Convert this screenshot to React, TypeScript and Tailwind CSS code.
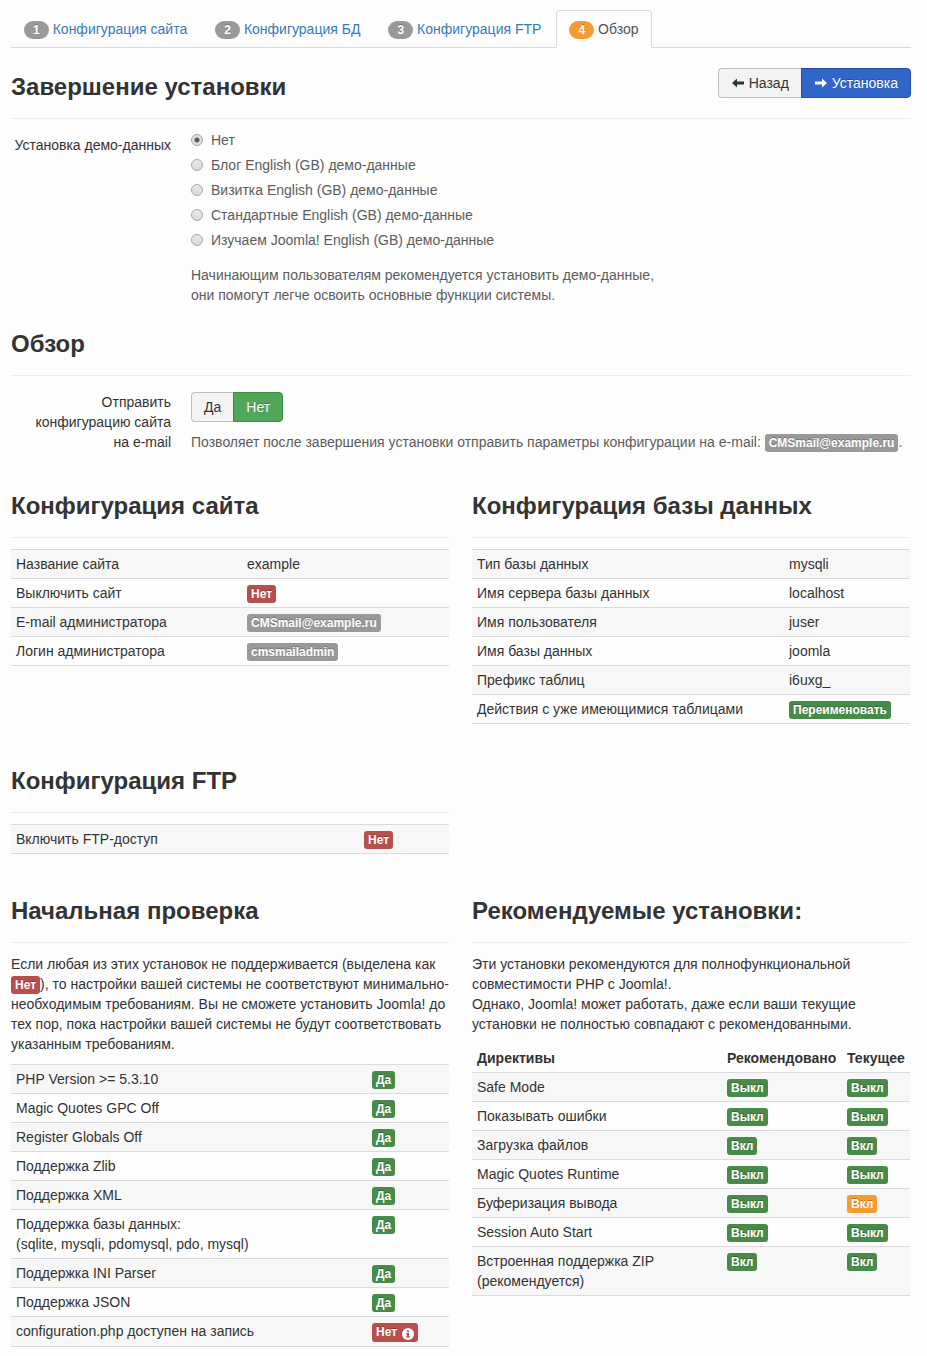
import { useState, type ReactNode } from "react";

type Tone = "gray" | "red" | "green" | "orange";

const tones: Record<Tone, string> = {
  gray: "bg-[#999999]",
  red: "bg-[#b94f4d]",
  green: "bg-[#488a4a]",
  orange: "bg-[#f59b30]",
};

function Label({ tone, children }: { tone: Tone; children: ReactNode }) {
  return (
    <span
      className={`inline-block whitespace-nowrap rounded-[3px] px-1 py-0.5 align-baseline text-[12px] leading-[14px] font-bold text-white [text-shadow:0_-1px_0_rgba(0,0,0,0.25)] ${tones[tone]}`}
    >
      {children}
    </span>
  );
}

const yes = <Label tone="green">Да</Label>;
const on = <Label tone="green">Вкл</Label>;
const off = <Label tone="green">Выкл</Label>;

function Heading({ children }: { children: ReactNode }) {
  return (
    <h3 className="mb-[11px] border-b border-[#ececec] pb-[11px] text-[24px] leading-10 font-bold">
      {children}
    </h3>
  );
}

type Row = [ReactNode, ...ReactNode[]];

function DataTable({ rows, widths, head }: { rows: Row[]; widths: string[]; head?: string[] }) {
  return (
    <table className="w-full table-fixed border-collapse text-left">
      <colgroup>
        {widths.map((w, i) => (
          <col key={i} className={w} />
        ))}
      </colgroup>
      {head && (
        <thead>
          <tr>
            {head.map((h) => (
              <th key={h} scope="col" className="px-[5px] py-1 font-bold">
                {h}
              </th>
            ))}
          </tr>
        </thead>
      )}
      <tbody className="border-b border-[#dadada]">
        {rows.map((row, i) => (
          <tr key={i} className="border-t border-[#dadada] odd:bg-[#f7f7f7]">
            {row.map((cell, j) => (
              <td key={j} className="px-[5px] py-1 align-top">
                {cell}
              </td>
            ))}
          </tr>
        ))}
      </tbody>
    </table>
  );
}

const steps = ["Конфигурация сайта", "Конфигурация БД", "Конфигурация FTP", "Обзор"];

const samples = [
  "Нет",
  "Блог English (GB) демо-данные",
  "Визитка English (GB) демо-данные",
  "Стандартные English (GB) демо-данные",
  "Изучаем Joomla! English (GB) демо-данные",
];

const siteRows: Row[] = [
  ["Название сайта", "example"],
  ["Выключить сайт", <Label tone="red">Нет</Label>],
  ["E-mail администратора", <Label tone="gray">CMSmail@example.ru</Label>],
  ["Логин администратора", <Label tone="gray">cmsmailadmin</Label>],
];

const databaseRows: Row[] = [
  ["Тип базы данных", "mysqli"],
  ["Имя сервера базы данных", "localhost"],
  ["Имя пользователя", "juser"],
  ["Имя базы данных", "joomla"],
  ["Префикс таблиц", "i6uxg_"],
  ["Действия с уже имеющимися таблицами", <Label tone="green">Переименовать</Label>],
];

const ftpRows: Row[] = [["Включить FTP-доступ", <Label tone="red">Нет</Label>]];

function InfoIcon() {
  return (
    <svg viewBox="0 0 12 12" className="ml-[5px] inline-block size-3 align-[-4px]" aria-hidden="true">
      <circle cx="6" cy="6" r="6" fill="#fff" />
      <path d="M5 2.5h2v1.7H5zM4.2 5H7v3.3h.9v1.2H4.1V8.3H5V6.2h-.8z" fill="#b94f4d" />
    </svg>
  );
}

const checkRows: Row[] = [
  ["PHP Version >= 5.3.10", yes],
  ["Magic Quotes GPC Off", yes],
  ["Register Globals Off", yes],
  ["Поддержка Zlib", yes],
  ["Поддержка XML", yes],
  [
    <>
      Поддержка базы данных:
      <br />
      (sqlite, mysqli, pdomysql, pdo, mysql)
    </>,
    yes,
  ],
  ["Поддержка INI Parser", yes],
  ["Поддержка JSON", yes],
  [
    "configuration.php доступен на запись",
    <Label tone="red">
      Нет
      <InfoIcon />
    </Label>,
  ],
];

const directiveRows: Row[] = [
  ["Safe Mode", off, off],
  ["Показывать ошибки", off, off],
  ["Загрузка файлов", on, on],
  ["Magic Quotes Runtime", off, off],
  ["Буферизация вывода", off, <Label tone="orange">Вкл</Label>],
  ["Session Auto Start", off, off],
  [
    <>
      Встроенная поддержка ZIP
      <br />
      (рекомендуется)
    </>,
    on,
    on,
  ],
];

function Arrow({ right = false }: { right?: boolean }) {
  return (
    <svg viewBox="0 0 14 10" className="h-2.5 w-3.5" fill="currentColor" aria-hidden="true">
      {right ? (
        <path d="M13 5 8 .4v3H1v3.2h7v3z" />
      ) : (
        <path d="M1 5 6 .4v3h7v3.2H6v3z" />
      )}
    </svg>
  );
}

export default function App() {
  const [sample, setSample] = useState(0);
  const [sendMail, setSendMail] = useState(false);
  const selected =
    "border-[#3d8843] bg-[#53a659] text-white [text-shadow:0_-1px_0_rgba(0,0,0,0.25)]";
  const plain = "border-[#bfbfbf] bg-[#f3f3f3]";

  return (
    <main className="min-h-screen bg-[#fdfdfd] pt-2.5 pr-4 pb-2 pl-[11px] font-['Liberation_Sans',Arial,sans-serif] text-[14px] leading-5 text-[#333]">
      <nav>
        <ul className="flex gap-0.5 border-b border-[#dadada]">
          {steps.map((step, i) => {
            const current = i === steps.length - 1;
            return (
              <li key={step} className="-mb-px">
                <a
                  href="#"
                  aria-current={current ? "step" : undefined}
                  className={`flex items-center gap-1 rounded-t border px-3 py-2 ${
                    current
                      ? "border-[#dadada] border-b-[#fdfdfd] bg-[#fdfdfd] text-[#555]"
                      : "border-transparent text-[#3579c0]"
                  }`}
                >
                  <span
                    className={`mt-px rounded-full px-[9px] py-0.5 text-[12px] leading-[14px] font-bold text-white [text-shadow:0_-1px_0_rgba(0,0,0,0.25)] ${
                      current ? tones.orange : tones.gray
                    }`}
                  >
                    {i + 1}
                  </span>
                  {step}
                </a>
              </li>
            );
          })}
        </ul>
      </nav>

      <header className="mt-[19px] mb-[11px] flex items-start justify-between border-b border-[#ececec] pb-[11px]">
        <h3 className="text-[24px] leading-10 font-bold">Завершение установки</h3>
        <div className="mt-px flex">
          <button
            type="button"
            className="flex h-[30px] items-center gap-1 rounded-l border border-r-0 border-[#bfbfbf] bg-[#f3f3f3] px-3"
          >
            <Arrow />
            Назад
          </button>
          <button
            type="button"
            className="flex h-[30px] items-center gap-1 rounded-r border border-[#24509f] bg-[#3066c9] px-3 text-white [text-shadow:0_-1px_0_rgba(0,0,0,0.25)]"
          >
            <Arrow right />
            Установка
          </button>
        </div>
      </header>

      <div className="flex gap-5">
        <div id="sample-label" className="w-40 shrink-0 pt-[5px] text-right">
          Установка демо-данных
        </div>
        <div className="text-[#5c5c5c]">
          <div role="radiogroup" aria-labelledby="sample-label" className="flex flex-col items-start gap-[5px]">
            {samples.map((text, i) => (
              <label key={text} className="flex items-center gap-2">
                <input
                  type="radio"
                  name="sample"
                  checked={sample === i}
                  onChange={() => setSample(i)}
                  className="size-3 appearance-none rounded-full border border-[#a6a6a6] bg-linear-to-b from-[#e9e9e9] to-[#dadada] checked:bg-[radial-gradient(circle,#5a5a5a_0_2px,#dedede_3px)]"
                />
                {text}
              </label>
            ))}
          </div>
          <p className="mt-[15px]">
            Начинающим пользователям рекомендуется установить демо-данные,
            <br />
            они помогут легче освоить основные функции системы.
          </p>
        </div>
      </div>

      <section className="mt-[19px]">
        <Heading>Обзор</Heading>
        <div className="flex gap-5 pt-[5px]">
          <div id="mail-label" className="w-40 shrink-0 text-right">
            Отправить
            <br />
            конфигурацию сайта
            <br />
            на e-mail
          </div>
          <div className="min-w-0 text-[#5c5c5c]">
            <div role="group" aria-labelledby="mail-label" className="flex text-[#333]">
              <button
                type="button"
                aria-pressed={sendMail}
                onClick={() => setSendMail(true)}
                className={`h-[30px] rounded-l border border-r-0 px-3 ${sendMail ? selected : plain}`}
              >
                Да
              </button>
              <button
                type="button"
                aria-pressed={!sendMail}
                onClick={() => setSendMail(false)}
                className={`h-[30px] rounded-r border px-3 ${sendMail ? plain : selected}`}
              >
                Нет
              </button>
            </div>
            <p className="mt-2.5">
              Позволяет после завершения установки отправить параметры конфигурации на e-mail:{" "}
              <Label tone="gray">CMSmail@example.ru</Label>.
            </p>
          </div>
        </div>
      </section>

      <div className="mt-[34px] grid grid-cols-2 gap-x-[23px] gap-y-[37px] pr-px">
        <section>
          <Heading>Конфигурация сайта</Heading>
          <DataTable rows={siteRows} widths={["w-auto", "w-[207px]"]} />
        </section>
        <section>
          <Heading>Конфигурация базы данных</Heading>
          <DataTable rows={databaseRows} widths={["w-auto", "w-[126px]"]} />
        </section>
        <section>
          <Heading>Конфигурация FTP</Heading>
          <DataTable rows={ftpRows} widths={["w-auto", "w-[90px]"]} />
        </section>
        <section className="col-start-1">
          <Heading>Начальная проверка</Heading>
          <p className="mb-2.5">
            Если любая из этих установок не поддерживается (выделена как{" "}
            <Label tone="red">Нет</Label>), то настройки вашей системы не соответствуют
            минимально-необходимым требованиям. Вы не сможете установить Joomla! до тех пор, пока
            настройки вашей системы не будут соответствовать указанным требованиям.
          </p>
          <DataTable rows={checkRows} widths={["w-auto", "w-[82px]"]} />
        </section>
        <section>
          <Heading>Рекомендуемые установки:</Heading>
          <p className="mb-2.5">
            Эти установки рекомендуются для полнофункциональной совместимости PHP с Joomla!.
            <br />
            Однако, Joomla! может работать, даже если ваши текущие установки не полностью совпадают
            с рекомендованными.
          </p>
          <DataTable
            head={["Директивы", "Рекомендовано", "Текущее"]}
            rows={directiveRows}
            widths={["w-auto", "w-[120px]", "w-[68px]"]}
          />
        </section>
      </div>
    </main>
  );
}
